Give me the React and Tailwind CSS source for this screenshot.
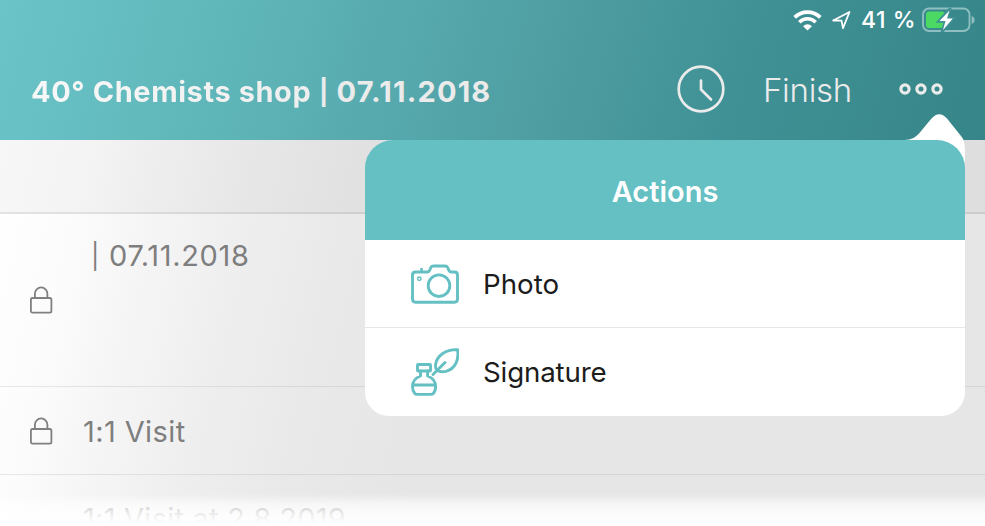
import React from "react";

function Lock() {
  return (
    <svg width="24" height="28" viewBox="0 0 24 28" fill="none" stroke="#808080" strokeWidth="1.8" className="block shrink-0">
      <rect x="1.900" y="12" width="20.500" height="14.600" rx="1.6" />
      <path d="M5.900 12V7.700a6.250 6.250 0 0 1 12.500 0V12" />
    </svg>
  );
}

function StatusBar() {
  return (
    <div className="flex h-10 items-center justify-end pr-[10px] text-white">
      <svg width="29" height="21" viewBox="0 0 29 21" fill="none" className="mr-[10px]">
        <path d="M1.7 7.4a18 18 0 0 1 25.6 0" stroke="white" strokeWidth="3.8" />
        <path d="M6.3 12.2a11.6 11.6 0 0 1 16.4 0" stroke="white" strokeWidth="3.5" />
        <path d="M10.1 16.2a6.2 6.2 0 0 1 8.8 0L14.5 20.6Z" fill="white" />
      </svg>
      <svg width="20" height="20" viewBox="0 0 20 20" fill="none" stroke="white" strokeWidth="1.8" strokeLinejoin="round" className="mr-[9px]">
        <path d="M1.200 10.500 17.500 2 11 18.200 9.500 10.600Z" />
      </svg>
      <span className="mr-[7px] w-[54px] whitespace-nowrap text-[23px] font-[450] leading-10 tracking-[0.5px]">41 %</span>
      <svg width="54" height="26" viewBox="0 0 54 26" fill="none" className="-mr-[1px]">
        <rect x="1" y="1.5" width="46.5" height="22.5" rx="6" stroke="#8fbfc1" strokeWidth="1.8" />
        <rect x="4" y="4.5" width="19" height="16.5" rx="3" fill="#4bd964" />
        <path d="M49.6 9v8c2-.8 3-2.2 3-4s-1-3.200-3-4Z" fill="#8fbfc1" />
        <path d="M28.500 1 16.500 14.500H23L20 25 31.800 11.200H25.500Z" fill="white" stroke="#3f9093" strokeWidth="2.600" />
        <path d="M27.500 3.500 17.500 14H23.500L21 23 30.800 11.500H25Z" fill="white" />
      </svg>
    </div>
  );
}

function Header() {
  return (
    <header className="h-[140px] bg-[linear-gradient(105deg,#6ac4c8_0%,#5fb6b9_24%,#4f9fa3_54%,#409195_74%,#368689_100%)]">
      <StatusBar />
      <div className="flex h-[98px] items-center pl-[31px] pr-[42px] text-[#ebebeb]">
        <h1 className="-mr-10 flex items-center whitespace-nowrap pt-1.5 text-[29px] font-bold leading-10">
          <span className="w-[288px] bg-[linear-gradient(90deg,#f8f8f8,#eeeeee)] bg-clip-text tracking-[0.57px] text-transparent">40° Chemists shop</span>
          <span className="w-[17.500px] text-[25px]">|</span>
          <span className="tracking-[1.17px]">07.11.2018</span>
        </h1>
        <svg width="48" height="48" viewBox="0 0 48 48" fill="none" stroke="#ebebeb" strokeWidth="2.700" strokeLinecap="round" className="ml-auto mr-[38px]">
          <circle cx="24" cy="24" r="22.300" />
          <path d="M24 15.500V24.500L34 34.500" />
        </svg>
        <span className="w-[89px] whitespace-nowrap pt-0.5 text-[33px] font-[350] leading-10 tracking-[-0.3px]">Finish</span>
        <svg width="44" height="14" viewBox="0 0 44 14" fill="none" stroke="#ebebeb" strokeWidth="3.200" className="ml-[47px]">
          <circle cx="6" cy="7" r="4.100" />
          <circle cx="22" cy="7" r="4.100" />
          <circle cx="38" cy="7" r="4.100" />
        </svg>
      </div>
    </header>
  );
}

function Popover() {
  return (
    <section className="absolute left-[365px] top-[112px] w-[600px]">
      <div className="h-7">
        <svg width="64" height="70" viewBox="0 0 64 70" className="ml-auto block">
          <path d="M0 28C9 28 13 27 18 21.500L30.500 6.500Q38.300 -2 46 6.500L60 24Q64 28 64 40V70H30L0 30Z" fill="white" />
        </svg>
      </div>
      <div className="relative overflow-hidden rounded-b-[24px] rounded-tl-[28px] rounded-tr-[28px] text-[27.700px] text-[#1c1c1c]">
        <h2 className="h-[100px] bg-[#65c0c3] pt-0.5 text-center text-[29px] font-semibold leading-[100px] text-white">Actions</h2>
        <div className="flex h-22 items-center border-b border-[#e6e6e6] bg-white pl-[46px]">
          <svg width="48" height="40" viewBox="0 0 48 40" fill="none" stroke="#65c0c3" strokeWidth="2.900" strokeLinejoin="round" className="mr-6">
            <path d="M4.500 8H16Q18 8 18.800 6L19.800 3.500Q20.500 2 22.500 2H34Q36 2 36.700 3.500L37.700 6Q38.500 8 40.500 8H43.500Q46.500 8 46.500 11V35Q46.500 38.200 43.500 38.200H4.500Q1.500 38.200 1.500 35V11Q1.500 8 4.500 8Z" />
            <path d="M10.500 8V4" strokeWidth="2.600" />
            <circle cx="28" cy="21.700" r="10.800" />
            <circle cx="8.300" cy="14.800" r="1.700" strokeWidth="1.500" />
          </svg>
          <span className="pt-[3px]">Photo</span>
        </div>
        <div className="flex h-22 items-center bg-white pl-[46px]">
          <svg width="48" height="48" viewBox="0 0 48 48" fill="none" stroke="#65c0c3" strokeWidth="2.900" strokeLinejoin="round" strokeLinecap="round" className="mr-6">
            <rect x="6.500" y="16.500" width="13" height="6.500" rx=".6" />
            <path d="M9.500 23V28C4 30 1.500 34 1.500 38.500C1.500 42 2.500 44 3.800 45.500Q4.500 46.400 6 46.400H20Q21.500 46.400 22.300 45.500C23.700 44 24.600 42 24.600 38.500C24.600 34 22 30 16.600 28V23M1.800 37H24.300" />
            <path d="M46.500 1.600C35 1.200 26 7.500 24.600 16.500Q24.100 20 26 22.300Q29.500 24.500 35 23.300C44 21 48.300 12 46.500 1.600ZM22 26.500 34 14.500" />
          </svg>
          <span className="pt-px tracking-[-0.15px]">Signature</span>
        </div>
      </div>
    </section>
  );
}

export default function App() {
  return (
    <div className="relative h-[526px] w-[985px] overflow-hidden bg-white font-['Inter','Liberation_Sans',sans-serif]">
      <Header />
      <main className="h-[386px] overflow-hidden bg-[linear-gradient(103deg,#ffffff_0%,#fcfcfc_8%,#f5f5f5_16%,#eeeeee_25%,#e9e9e9_34%,#e6e6e6_46%,#e6e6e6_100%)] text-[29px] leading-10 text-[#7e7e7e]">
        <div className="h-[74px] border-b-2 border-black/[0.08] bg-black/[0.03]" />
        <div className="h-[173px] border-b border-black/[0.08] pt-[22px]">
          <p className="ml-[91px] flex items-center tracking-[0.65px]">
            <span className="w-[18px] text-[25px]">|</span>
            <span>07.11.2018</span>
          </p>
          <div className="ml-[29px] mt-[10px]"><Lock /></div>
        </div>
        <div className="flex h-22 items-center border-b border-black/[0.08] pl-[29px]">
          <Lock />
          <span className="ml-[30px] pt-[3px] tracking-[0.4px]">1:1 Visit</span>
        </div>
        <div className="h-[51px]">
          <p className="ml-[83px] pt-6 leading-[40px] tracking-[0.25px] text-[#777777]">1:1 Visit at 2.8.2019</p>
        </div>
      </main>
      <div className="absolute bottom-0 left-0 h-[32px] w-full bg-[linear-gradient(180deg,transparent_0%,rgba(255,255,255,0.65)_32%,rgba(255,255,255,0.88)_65%,#ffffff_92%)]" />
      <Popover />
    </div>
  );
}
